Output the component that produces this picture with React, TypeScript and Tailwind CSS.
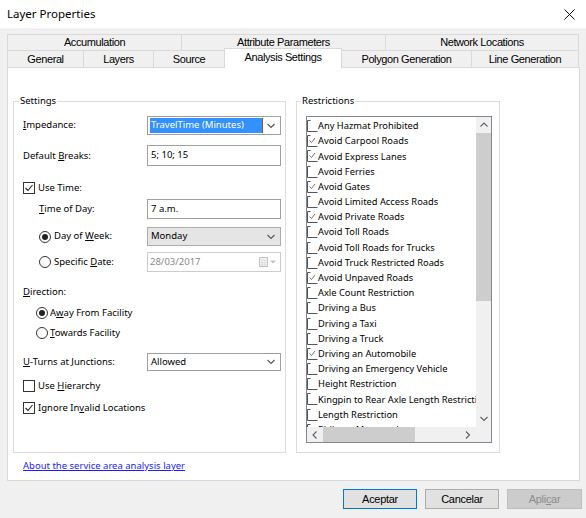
import React from 'react'

const RESTRICTIONS: { label: string; checked: boolean }[] = [
  { label: 'Any Hazmat Prohibited', checked: false },
  { label: 'Avoid Carpool Roads', checked: true },
  { label: 'Avoid Express Lanes', checked: true },
  { label: 'Avoid Ferries', checked: false },
  { label: 'Avoid Gates', checked: true },
  { label: 'Avoid Limited Access Roads', checked: false },
  { label: 'Avoid Private Roads', checked: true },
  { label: 'Avoid Toll Roads', checked: false },
  { label: 'Avoid Toll Roads for Trucks', checked: false },
  { label: 'Avoid Truck Restricted Roads', checked: false },
  { label: 'Avoid Unpaved Roads', checked: true },
  { label: 'Axle Count Restriction', checked: false },
  { label: 'Driving a Bus', checked: false },
  { label: 'Driving a Taxi', checked: false },
  { label: 'Driving a Truck', checked: false },
  { label: 'Driving an Automobile', checked: true },
  { label: 'Driving an Emergency Vehicle', checked: false },
  { label: 'Height Restriction', checked: false },
  { label: 'Kingpin to Rear Axle Length Restriction', checked: false },
  { label: 'Length Restriction', checked: false },
  { label: 'Riding a Motorcycle', checked: false },
]

function Chevron({ dir = 'down', color = '#555' }: { dir?: 'down' | 'up' | 'left' | 'right'; color?: string }) {
  const d = {
    down: 'M0.5 1 L4 4.5 L7.5 1',
    up: 'M0.5 4.5 L4 1 L7.5 4.5',
    left: 'M4.5 0.5 L1 4 L4.5 7.5',
    right: 'M1 0.5 L4.5 4 L1 7.5',
  }[dir]
  const horiz = dir === 'left' || dir === 'right'
  return (
    <svg width={horiz ? 6 : 8} height={horiz ? 8 : 6} viewBox={horiz ? '0 0 6 8' : '0 0 8 6'}>
      <path d={d} fill="none" stroke={color} strokeWidth="1.1" />
    </svg>
  )
}

function CheckBox({ checked }: { checked: boolean }) {
  return (
    <span className="w-[12px] h-[12px] border border-[#333] bg-white flex items-center justify-center shrink-0">
      {checked && (
        <svg width="10" height="10" viewBox="0 0 10 10">
          <path d="M1.5 5 L4 7.5 L8.5 2" fill="none" stroke="#222" strokeWidth="1.1" />
        </svg>
      )}
    </span>
  )
}

function Radio({ checked }: { checked: boolean }) {
  return (
    <span className="w-[12px] h-[12px] rounded-full border border-[#333] bg-white flex items-center justify-center shrink-0">
      {checked && <span className="w-[6px] h-[6px] rounded-full bg-[#222]" />}
    </span>
  )
}

function ListCheck({ checked }: { checked: boolean }) {
  return (
    <svg width="11" height="12" viewBox="0 0 11 12" className="shrink-0">
      <path d="M3.5 0.5 H0.5 V11.5 H10.5" fill="none" stroke="#555" />
      {checked && <path d="M2.5 5.5 L4.5 7.5 L8 3" fill="none" stroke="#666" strokeWidth="0.9" />}
    </svg>
  )
}

function Group({ title, className, legendClass, children }: { title: string; className: string; legendClass: string; children: React.ReactNode }) {
  return (
    <div className={`relative border border-[#dcdcdc] ${className}`}>
      <span className={`absolute -top-[8px] bg-white px-[1px] leading-[14px] ${legendClass}`}>{title}</span>
      {children}
    </div>
  )
}

export default function App() {
  return (
    <div className="w-[586px] h-[518px] bg-[#f0f0f0] flex flex-col overflow-hidden text-black font-['Noto_Sans',sans-serif] text-[9.5px]">
      {/* Title bar */}
      <div className="h-[28px] bg-white flex items-center justify-between pl-[7px] pr-[11px] shrink-0">
        <span className="text-[11.5px]">Layer Properties</span>
        <svg width="11" height="11" viewBox="0 0 11 11">
          <path d="M0.5 0.5 L10.5 10.5 M10.5 0.5 L0.5 10.5" stroke="#111" strokeWidth="1" />
        </svg>
      </div>

      {/* Tabs */}
      <div className="mt-[6px] mx-[7px] font-['Liberation_Sans',Arial,sans-serif] text-[11px] tracking-[-0.4px] shrink-0">
        <div className="flex h-[16px]">
          <div className="w-[174px] border-t border-l border-[#d9d9d9] flex items-center justify-center">Accumulation</div>
          <div className="w-[204px] border-t border-l border-[#d9d9d9] flex items-center justify-center">Attribute Parameters</div>
          <div className="w-[194px] border-t border-l border-r border-[#d9d9d9] flex items-center justify-center">Network Locations</div>
        </div>
        <div className="flex h-[17px]">
          <div className="w-[76px] border-t border-l border-[#d9d9d9] flex items-center justify-center">General</div>
          <div className="w-[70px] border-t border-l border-[#d9d9d9] flex items-center justify-center">Layers</div>
          <div className="w-[71px] border-t border-l border-[#d9d9d9] flex items-center justify-center">Source</div>
          <div className="relative z-10 -mt-[2px] h-[20px] w-[118px] bg-white border-t border-x border-[#d9d9d9] flex items-center justify-center pb-[3px]">Analysis Settings</div>
          <div className="w-[129px] border-t border-[#d9d9d9] flex items-center justify-center">Polygon Generation</div>
          <div className="w-[108px] border-t border-l border-r border-[#d9d9d9] flex items-center justify-center">Line Generation</div>
        </div>
      </div>

      {/* Tab page */}
      <div className="mx-[7px] w-[573px] h-[414px] bg-white border border-[#d9d9d9] flex flex-col shrink-0">
        <div className="flex pt-[33px] pl-[5px] gap-[10px]">
          <Group title="Settings" className="w-[273px] h-[352px]" legendClass="left-[5px]">
            <div className="flex flex-col pl-[9px]">
              <div className="mt-[14px] h-[19px] flex items-center">
                <span className="w-[124px]"><u>I</u>mpedance:</span>
                <div className="w-[134px] h-[19px] border border-[#a0a0a0] bg-white flex items-center pl-[2px] pr-[5px]">
                  <span className="h-[15px] w-[113px] bg-[#3390ff] text-white flex items-center pl-[1px] border-r border-[#8a5a20]">TravelTime (Minutes)</span>
                  <span className="ml-auto"><Chevron /></span>
                </div>
              </div>
              <div className="mt-[10px] h-[21px] flex items-center">
                <span className="w-[124px] pt-[1px]">Default <u>B</u>reaks:</span>
                <div className="w-[134px] h-[21px] border border-[#a0a0a0] bg-white pl-[3px] pt-[2px] leading-[14px]">5; 10; 15</div>
              </div>
              <div className="mt-[15px] h-[14px] flex items-center gap-[3px]">
                <CheckBox checked />
                <span>Use Time:</span>
              </div>
              <div className="mt-[4px] h-[20px] flex items-center">
                <span className="w-[124px] pl-[16px]"><u>T</u>ime of Day:</span>
                <div className="w-[134px] h-[20px] border border-[#a0a0a0] bg-white pl-[3px] pt-[2px] leading-[14px]">7 a.m.</div>
              </div>
              <div className="mt-[8px] h-[19px] flex items-center">
                <div className="w-[124px] pl-[16px] flex items-center gap-[3px]">
                  <Radio checked />
                  <span>Day of <u>W</u>eek:</span>
                </div>
                <div className="w-[134px] h-[19px] border border-[#acacac] bg-[#e5e5e5] flex items-center pl-[3px] pr-[5px]">
                  <span>Monday</span>
                  <span className="ml-auto"><Chevron /></span>
                </div>
              </div>
              <div className="mt-[6px] h-[20px] flex items-center">
                <div className="w-[124px] pl-[16px] flex items-center gap-[3px]">
                  <Radio checked={false} />
                  <span>Specific <u>D</u>ate:</span>
                </div>
                <div className="w-[134px] h-[20px] border border-[#cccccc] bg-white flex items-center pl-[2px] pr-[4px] text-[#8a8a8a]">
                  <span>28/03/2017</span>
                  <span className="ml-auto flex items-center gap-[2px]">
                    <svg width="9" height="10" viewBox="0 0 9 10">
                      <rect x="0.5" y="0.5" width="8" height="9" fill="#f4f4f4" stroke="#c4c4c4" />
                      <path d="M0.5 3 H8.5 M0.5 5.5 H8.5 M0.5 8 H8.5 M3 3 V9.5 M6 3 V9.5" stroke="#d4d4d4" strokeWidth="0.6" />
                    </svg>
                    <svg width="6" height="4" viewBox="0 0 6 4">
                      <path d="M0 0.5 H6 L3 3.5 Z" fill="#c0c0c0" />
                    </svg>
                  </span>
                </div>
              </div>
              <div className="mt-[13px] h-[14px] flex items-center">
                <span><u>D</u>irection:</span>
              </div>
              <div className="mt-[7px] h-[14px] flex items-center gap-[2px] pl-[13px]">
                <Radio checked />
                <span>A<u>w</u>ay From Facility</span>
              </div>
              <div className="mt-[6px] h-[14px] flex items-center gap-[2px] pl-[13px]">
                <Radio checked={false} />
                <span><u>T</u>owards Facility</span>
              </div>
              <div className="mt-[13px] h-[18px] flex items-center">
                <span className="w-[124px]"><u>U</u>-Turns at Junctions:</span>
                <div className="w-[134px] h-[18px] border border-[#a0a0a0] bg-white flex items-center pl-[3px] pr-[5px]">
                  <span>Allowed</span>
                  <span className="ml-auto"><Chevron /></span>
                </div>
              </div>
              <div className="mt-[8px] h-[14px] flex items-center gap-[3px]">
                <CheckBox checked={false} />
                <span>Use <u>H</u>ierarchy</span>
              </div>
              <div className="mt-[8px] h-[14px] flex items-center gap-[3px]">
                <CheckBox checked />
                <span>Ignore In<u>v</u>alid Locations</span>
              </div>
            </div>
          </Group>

          <Group title="Restrictions" className="w-[204px] h-[352px]" legendClass="left-[4px]">
            <div className="ml-[9px] mt-[14px] w-[186px] h-[327px] border border-[#828790] flex flex-col">
              <div className="flex h-[310px]">
                <div className="w-[169px] overflow-hidden pt-[1.5px]">
                  {RESTRICTIONS.map(r => (
                    <div key={r.label} className="h-[15.2px] flex items-center whitespace-nowrap text-[9.3px]">
                      <ListCheck checked={r.checked} />
                      <span>{r.label}</span>
                    </div>
                  ))}
                </div>
                <div className="w-[15px] bg-[#f0f0f0] flex flex-col">
                  <div className="h-[16px] flex items-center justify-center"><Chevron dir="up" color="#606060" /></div>
                  <div className="h-[168px] bg-[#cdcdcd]" />
                  <div className="flex-1" />
                  <div className="h-[16px] flex items-center justify-center"><Chevron dir="down" color="#606060" /></div>
                </div>
              </div>
              <div className="flex h-[15px]">
                <div className="w-[169px] bg-[#f0f0f0] flex">
                  <div className="w-[16px] flex items-center justify-center"><Chevron dir="left" color="#606060" /></div>
                  <div className="w-[92px] bg-[#cdcdcd]" />
                  <div className="flex-1" />
                  <div className="w-[16px] flex items-center justify-center"><Chevron dir="right" color="#606060" /></div>
                </div>
                <div className="w-[15px] bg-[#f0f0f0]" />
              </div>
            </div>
          </Group>
        </div>
        <a href="#" className="mt-[6px] ml-[15px] w-fit text-[#1a1aff] underline leading-[14px]">
          About the service area analysis layer
        </a>
      </div>

      {/* Buttons */}
      <div className="flex justify-end gap-[8px] mt-[8px] pr-[4px] font-['Liberation_Sans',Arial,sans-serif] text-[11px] tracking-[-0.3px] shrink-0">
        <button className="w-[74px] h-[20px] bg-[#e1e1e1] border border-[#0078d7] flex items-center justify-center">Aceptar</button>
        <button className="w-[74px] h-[20px] bg-[#e1e1e1] border border-[#adadad] flex items-center justify-center">Cancelar</button>
        <button className="w-[75px] h-[20px] bg-[#cccccc] border border-[#bfbfbf] text-[#8c8c8c] flex items-center justify-center">Apli<u>c</u>ar</button>
      </div>
    </div>
  )
}
